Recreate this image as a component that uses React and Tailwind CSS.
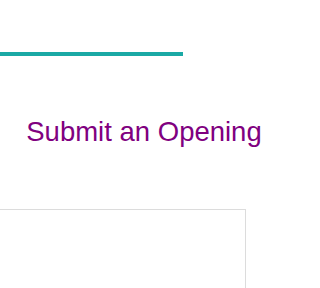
export default function App() {
  return (
    <div className="w-[288px] h-[288px] overflow-hidden bg-white" style={{ fontFamily: '"Liberation Sans", Arial, sans-serif' }}>
      <div className="pt-[52px]">
        <div className="w-[183px] h-[4px] bg-[#1aa9a5]" />
      </div>
      <h1 className="mt-[62px] text-center text-[27.5px] leading-[28px] text-[#800080] font-normal">Submit an Opening</h1>
      <div className="mt-[63px] ml-[-2px] w-[248px] h-[120px] border border-[#dcdcdc]" />
    </div>
  );
}
